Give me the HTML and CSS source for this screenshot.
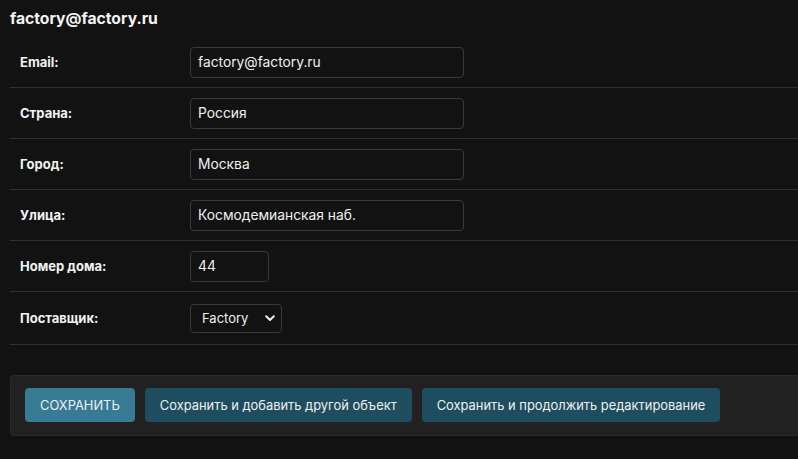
FILE: index.html
```html
<!DOCTYPE html>
<html lang="ru">
<head>
<meta charset="utf-8">
<link rel="stylesheet" href="styles.css">
</head>
<body>
<div class="content">
  <h2 class="title">factory@factory.ru</h2>
  <fieldset class="module">
    <div class="form-row">
      <label class="label">Email:</label>
      <input class="input wide" type="text" value="factory@factory.ru">
    </div>
    <div class="form-row">
      <label class="label">Страна:</label>
      <input class="input wide" type="text" value="Россия">
    </div>
    <div class="form-row">
      <label class="label">Город:</label>
      <input class="input wide" type="text" value="Москва">
    </div>
    <div class="form-row">
      <label class="label">Улица:</label>
      <input class="input wide" type="text" value="Космодемианская наб.">
    </div>
    <div class="form-row">
      <label class="label">Номер дома:</label>
      <input class="input small" type="text" value="44">
    </div>
    <div class="form-row row-select">
      <label class="label">Поставщик:</label>
      <div class="select-wrap">
        <select class="select"><option>Factory</option></select>
        <svg class="chevron" width="10" height="7" viewBox="0 0 10 7"><path d="M1.2 1.3 L5 5 L8.8 1.3" fill="none" stroke="#f0f0f0" stroke-width="2" stroke-linecap="round" stroke-linejoin="round"/></svg>
      </div>
    </div>
  </fieldset>
  <div class="submit-row">
    <button class="btn default">СОХРАНИТЬ</button>
    <button class="btn">Сохранить и добавить другой объект</button>
    <button class="btn">Сохранить и продолжить редактирование</button>
  </div>
</div>
</body>
</html>
```
FILE: styles.css
```css
html, body {
  margin: 0;
  padding: 0;
  background: #121212;
  color: #eeeeee;
  font-family: Inter, "Noto Sans", sans-serif;
  font-size: 13px;
}
.content {
  padding: 9px 0 0 10px;
}
.title {
  margin: 0 0 8px 0;
  font-size: 15.7px;
  font-weight: 700;
  color: #f5f5f5;
  line-height: 20px;
}
.module {
  border: none;
  margin: 0;
  padding: 0;
}
.form-row {
  display: flex;
  align-items: center;
  padding: 10px 10px;
  border-bottom: 1px solid #303030;
  height: 30px;
}
.row-select {
  height: 32px;
}
.label {
  width: 170px;
  font-weight: 700;
  font-size: 13px;
  color: #f2f2f2;
}
.input {
  box-sizing: border-box;
  height: 31px;
  background: #121212;
  border: 1px solid #3a3a3a;
  border-radius: 4px;
  color: #f0f0f0;
  font-family: inherit;
  font-size: 13.8px;
  padding: 5px 7px;
  outline: none;
}
.wide { width: 274px; }
.small { width: 79px; }
.select-wrap {
  position: relative;
  width: 92px;
  height: 29px;
}
.select {
  appearance: none;
  -webkit-appearance: none;
  box-sizing: border-box;
  width: 92px;
  height: 29px;
  background: #121212;
  border: 1px solid #3a3a3a;
  border-radius: 4px;
  color: #f0f0f0;
  font-family: inherit;
  font-size: 13px;
  padding: 0 0 0 11px;
}
.chevron {
  position: absolute;
  right: 7px;
  top: 11px;
  pointer-events: none;
}
.submit-row {
  display: flex;
  gap: 10px;
  margin-top: 30px;
  padding: 12px 14px 13px;
  background: #212121;
  border: 1px solid #2a2a2a;
  border-right: none;
  border-radius: 4px 0 0 4px;
}
.btn {
  height: 34px;
  padding: 0 15px;
  border: none;
  border-radius: 4px;
  background: #1d4d5f;
  color: #f0f0f0;
  font-family: inherit;
  font-size: 12.9px;
  cursor: pointer;
}
.btn.default {
  background: #377a93;
}
```
